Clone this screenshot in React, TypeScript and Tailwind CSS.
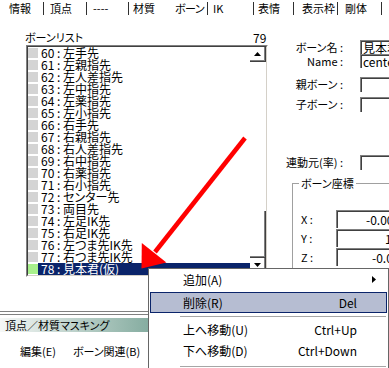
import React from "react";

const bones = [
  "左手先",
  "左親指先",
  "左人差指先",
  "左中指先",
  "左薬指先",
  "左小指先",
  "右手先",
  "右親指先",
  "右人差指先",
  "右中指先",
  "右薬指先",
  "右小指先",
  "センター先",
  "両目先",
  "左足IK先",
  "右足IK先",
  "左つま先IK先",
  "右つま先IK先",
  "見本君(仮)",
];

function UpArrow() {
  return (
    <svg width="7" height="4" viewBox="0 0 7 4">
      <path d="M3.5 0 7 4H0Z" fill="#000" />
    </svg>
  );
}

function DownArrow() {
  return (
    <svg width="7" height="4" viewBox="0 0 7 4">
      <path d="M0 0h7L3.5 4Z" fill="#000" />
    </svg>
  );
}

function Field({ text, className }: { text?: string; className?: string }) {
  return (
    <div
      className={`w-[80px] shrink-0 whitespace-nowrap border-t border-l border-[#808080] bg-white text-[12px] leading-[12px] shadow-[inset_1px_1px_0_#404040] ${className ?? ""}`}
    >
      {text}
    </div>
  );
}

export default function App() {
  return (
    <div className="relative h-[368px] w-[389px] overflow-hidden bg-white text-[12px] text-black [font-family:'Noto_Sans_CJK_JP',sans-serif] [font-feature-settings:'palt']">
      {/* tabs */}
      <div className="flex h-[17px] whitespace-nowrap pt-[2px] text-[11px] leading-[13px]">
        <div className="h-[13px] w-[44px] border-r border-[#303030] pl-[9px]">情報</div>
        <div className="h-[13px] w-[43px] border-r border-[#303030] pl-[6px]">頂点</div>
        <div className="h-[13px] w-[42px] border-r border-[#303030] pl-[6px]">----</div>
        <div className="h-[13px] w-[43px] pl-[4px]">材質</div>
        <div className="h-[13px] w-[36px] border-r border-[#303030] pl-[3px] tracking-[-0.5px]">ボーン</div>
        <div className="h-[13px] w-[46px] border-r border-[#303030] pl-[5px]">IK</div>
        <div className="h-[13px] w-[40px] border-r border-[#303030] pl-[4px]">表情</div>
        <div className="h-[13px] w-[44px] border-r border-[#303030] pl-[8px]">表示枠</div>
        <div className="h-[13px] w-[44px] border-r border-[#303030] pl-[7px]">剛体</div>
      </div>

      <div className="flex">
        {/* left column */}
        <div className="flex w-[270px] shrink-0 flex-col">
          <div className="mt-[14px] flex h-[13px] leading-[13px]">
            <span className="w-[253px] pl-[25px] text-[11px]">ボーンリスト</span>
            <span>79</span>
          </div>

          <div className="mt-[1px] ml-[26px] h-[232px] w-[242px] border border-t-[#808080] border-l-[#808080] border-r-white border-b-white">
            <div className="flex h-full border border-t-[#404040] border-l-[#404040] border-r-[#d4d0c8] border-b-[#d4d0c8]">
              <div className="w-[222px] overflow-hidden">
                {bones.map((name, i) => {
                  const last = i === bones.length - 1;
                  return (
                    <div key={i} className="flex h-[12px] items-center">
                      <div className={`h-[10px] w-[10px] ${last ? "bg-[#a8f08c]" : "bg-[#d4d4d4]"}`} />
                      <div
                        className={`h-full flex-1 whitespace-nowrap pl-[3px] leading-[12px] ${last ? "bg-[#0a246a] text-white" : ""}`}
                      >
                        {60 + i} : {name}
                      </div>
                    </div>
                  );
                })}
              </div>
              <div className="flex w-[16px] flex-col">
                <div className="flex h-[15px] items-center justify-center border-r border-b border-[#404040] bg-white shadow-[inset_-1px_-1px_0_#808080]">
                  <UpArrow />
                </div>
                <div className="h-[149px]" />
                <div className="h-[47px] border-r border-b border-[#404040] bg-white shadow-[inset_-1px_-1px_0_#808080]" />
                <div className="flex h-[17px] items-center justify-center border-r border-b border-[#404040] bg-white pb-[2px] shadow-[inset_-1px_-1px_0_#808080]">
                  <DownArrow />
                </div>
              </div>
            </div>
          </div>

          <div className="mt-[34px] h-[4px] border-y border-[#808080]" />
          <div className="mt-[3px] h-[14px] w-[148px] whitespace-nowrap bg-gradient-to-r from-[#f6f8f7] to-[#86ada1] pl-[5px] text-[11px] leading-[14px]">
            頂点／材質マスキング
          </div>
          <div className="mt-[12px] flex h-[15px] items-center whitespace-nowrap text-[11px]">
            <span className="pl-[20px]">編集(E)</span>
            <span className="ml-[17px]">ボーン関連(B)</span>
          </div>
        </div>

        {/* right column */}
        <div className="flex flex-1 flex-col whitespace-nowrap text-[11px]">
          <div className="mt-[23px] flex h-[14px] items-center">
            <span className="w-[73px] text-right">ボーン名 :</span>
            <Field text="見本君(仮)" className="ml-[17px] h-[14px] pl-[2px] pt-[1px]" />
          </div>
          <div className="flex h-[14px] items-center">
            <span className="w-[73px] text-right">Name :</span>
            <Field text="center" className="ml-[17px] h-[14px] pl-[2px] pt-[1px]" />
          </div>
          <div className="mt-[9px] flex h-[15px] items-center">
            <span className="w-[73px] text-right">親ボーン :</span>
            <Field className="ml-[17px] h-[15px]" />
          </div>
          <div className="mt-[5px] flex h-[15px] items-center">
            <span className="w-[73px] text-right">子ボーン :</span>
            <Field className="ml-[17px] h-[15px]" />
          </div>
          <div className="mt-[43px] flex h-[15px] items-center">
            <span className="w-[73px] text-right">連動元(率) :</span>
            <Field className="ml-[17px] h-[15px]" />
          </div>

          <div className="relative mt-[13px] ml-[22px] h-[120px] border-t border-l border-[#a0a0a0] pt-[26px]">
            <span className="absolute -top-[8px] left-[6px] bg-white px-[2px] leading-[15px]">
              ボーン座標
            </span>
            <div className="flex h-[18px] items-center">
              <span className="w-[43px] pl-[8px]">X :</span>
              <Field text="-0.000" className="h-[18px] pl-[29px] pt-[3px]" />
            </div>
            <div className="mt-[1px] flex h-[18px] items-center">
              <span className="w-[43px] pl-[8px]">Y :</span>
              <Field text="1.0000" className="h-[18px] pl-[48px] pt-[3px]" />
            </div>
            <div className="mt-[1px] flex h-[18px] items-center">
              <span className="w-[43px] pl-[8px]">Z :</span>
              <Field text="-0.000" className="h-[18px] pl-[35px] pt-[3px]" />
            </div>
          </div>
        </div>
      </div>

      {/* red arrow annotation */}
      <svg className="pointer-events-none absolute top-0 left-0" width="389" height="368">
        <line x1="245" y1="138" x2="155" y2="252" stroke="#ff0000" strokeWidth="4.5" />
        <polygon points="141.5,268.5 141.8,242.9 166.4,262.4" fill="#ff0000" />
      </svg>

      {/* context menu */}
      <div className="absolute top-[268px] left-[148px] h-[110px] w-[241px] whitespace-nowrap border border-[#666666] bg-white">
        <div className="flex h-[21px] items-center pl-[34px] pr-[12px]">
          <span className="flex-1">追加(A)</span>
          <svg width="4" height="7" viewBox="0 0 4 7">
            <path d="M0 0l4 3.5L0 7Z" fill="#000" />
          </svg>
        </div>
        <div className="mx-[1px] mt-[2px] flex h-[21px] items-center border border-[#0a246a] bg-[#b6bdd2] pr-[29px] pl-[32px]">
          <span className="flex-1">削除(R)</span>
          <span>Del</span>
        </div>
        <div className="mt-[3px] mr-[2px] ml-[31px] h-px bg-[#a6a6a6]" />
        <div className="mt-[2px] flex h-[21px] items-center pr-[31px] pl-[34px]">
          <span className="flex-1">上へ移動(U)</span>
          <span>Ctrl+Up</span>
        </div>
        <div className="flex h-[21px] items-center pr-[31px] pl-[34px]">
          <span className="flex-1">下へ移動(D)</span>
          <span>Ctrl+Down</span>
        </div>
        <div className="mt-[5px] mr-[2px] ml-[31px] h-px bg-[#a6a6a6]" />
      </div>
    </div>
  );
}
